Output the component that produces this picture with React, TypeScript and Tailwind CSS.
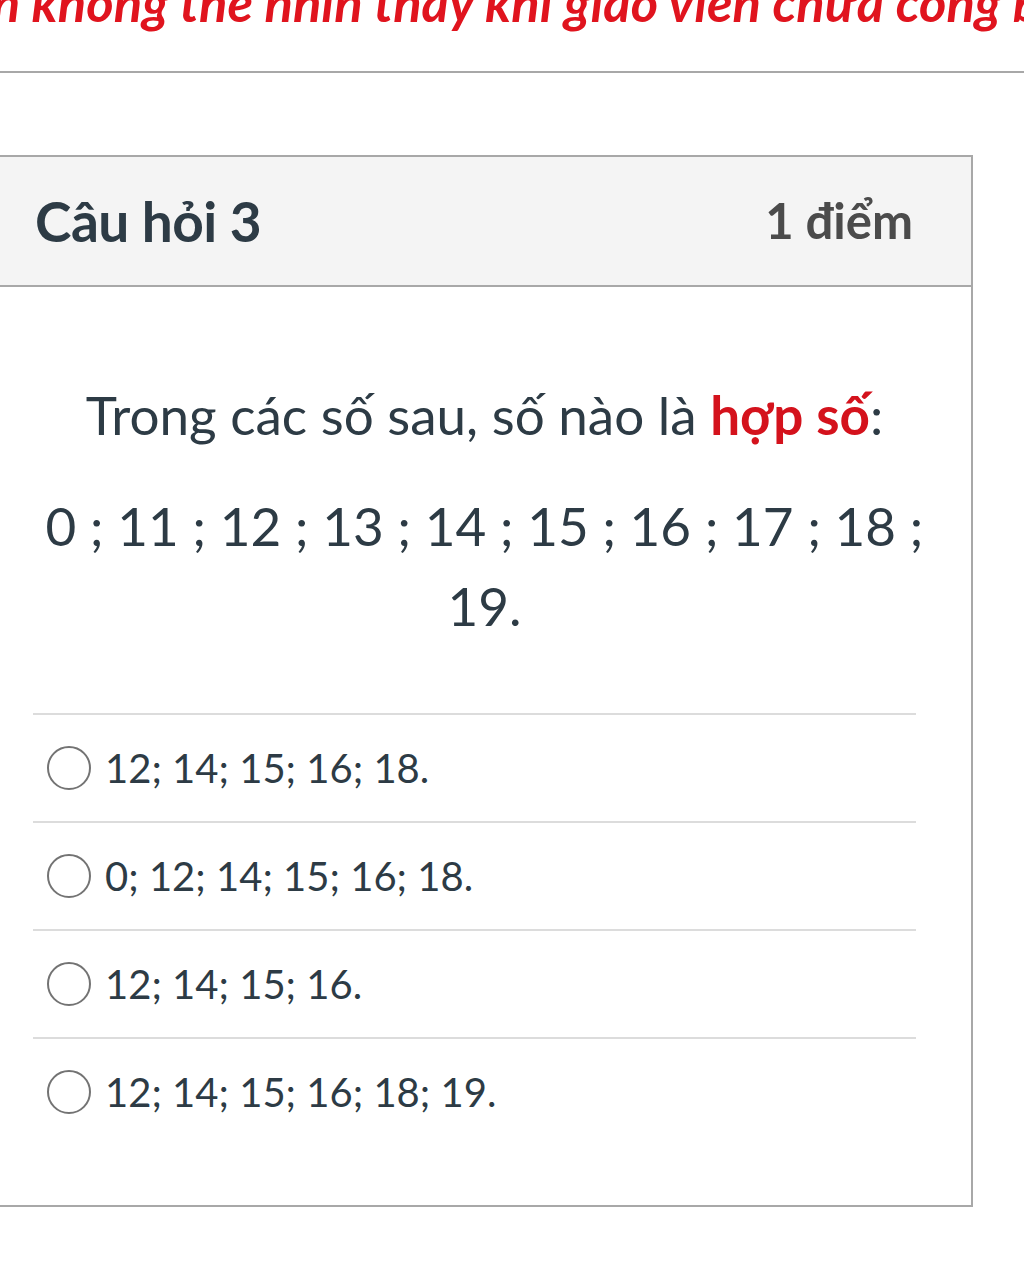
import React from "react";

const answers = ["12; 14; 15; 16; 18.", "0; 12; 14; 15; 16; 18.", "12; 14; 15; 16.", "12; 14; 15; 16; 18; 19."];

export default function App() {
  return (
    <main className="h-[1280px] w-[1024px] overflow-hidden bg-white font-['Lato','Liberation_Sans',sans-serif] text-[#2d3b45]">
      <div className="relative h-[73px] overflow-hidden border-b-2 border-[#a8a8a8]">
        <p className="absolute left-[-140px] top-[-30px] whitespace-nowrap text-[52.5px] font-bold italic leading-[63px] text-[#e0141e]">
          Đáp án không thể nhìn thấy khi giáo viên chưa công bố điểm
        </p>
      </div>

      <section className="ml-[-4px] mt-[82px] w-[977px] border-2 border-[#a8a8a8]">
        <header className="flex h-[130px] items-center justify-between border-b-2 border-[#a8a8a8] bg-[#f4f4f4] pl-[37px] pr-[58px]">
          <h2 className="text-[55px] font-bold tracking-[-0.5px]">Câu hỏi 3</h2>
          <span className="text-[49px] font-bold text-[#4b4b4b]">1 điểm</span>
        </header>

        <div className="px-[30px] pt-[96px] pb-[60px]">
          <p className="text-center text-[53px] leading-[64px]">
            Trong các số sau, số nào là <strong className="font-bold text-[#d4121c]">hợp số</strong>:
          </p>
          <p className="mt-[39px] text-center text-[53px] leading-[80px]">
            0 ; 11 ; 12 ; 13 ; 14 ; 15 ; 16 ; 17 ; 18 ; 19.
          </p>

          <div className="mx-[5px] mt-[67px] pr-[20px]">
            {answers.map((a) => (
              <div key={a} className="flex h-[108px] items-center gap-[14px] border-t-2 border-[#dcdcdc] pl-[14px]">
                <span className="h-[44px] w-[44px] shrink-0 rounded-full border-2 border-[#737373]" />
                <span className="text-[40px]">{a}</span>
              </div>
            ))}
          </div>
        </div>
      </section>
    </main>
  );
}
